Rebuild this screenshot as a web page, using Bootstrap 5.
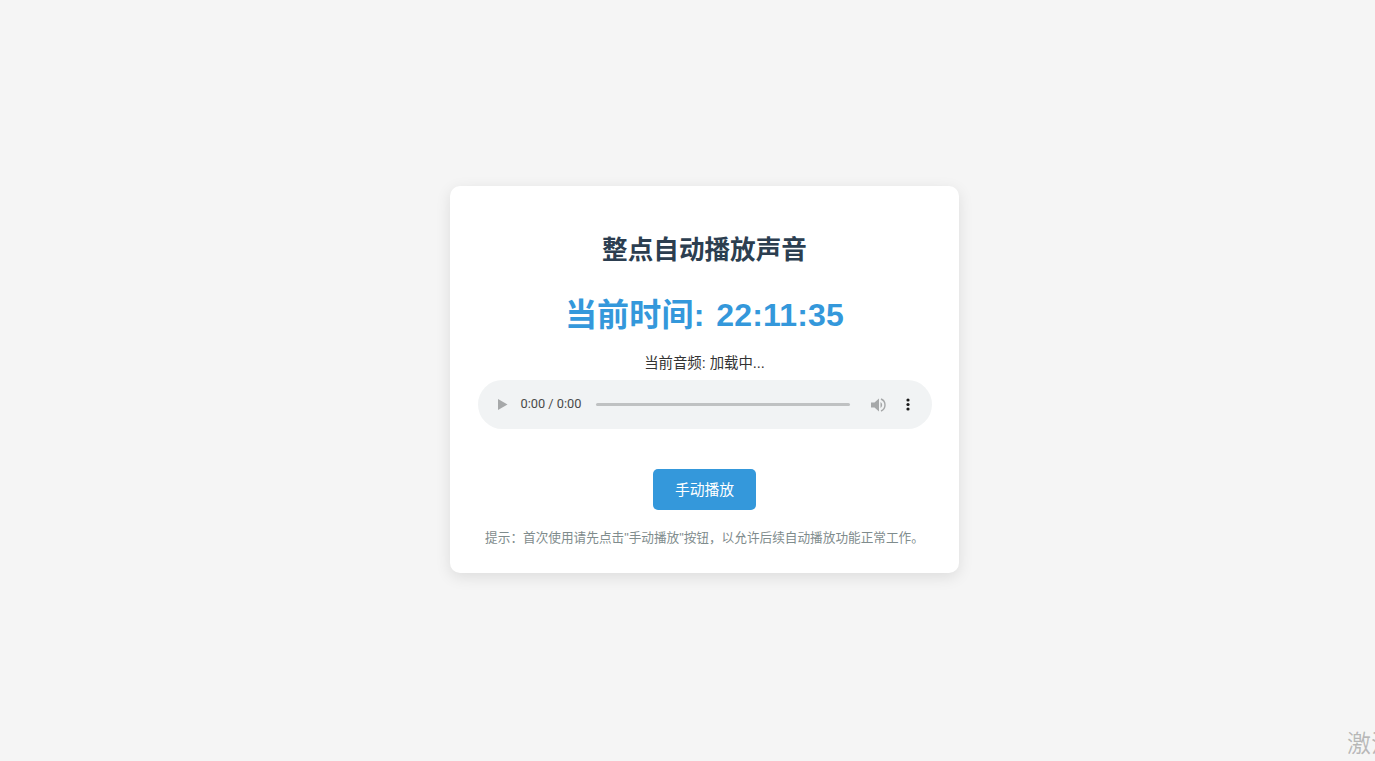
<!DOCTYPE html>
<html lang="zh-CN">
<head>
<meta charset="utf-8">
<title>整点自动播放声音</title>
<link href="https://cdn.jsdelivr.net/npm/bootstrap@5.3.0/dist/css/bootstrap.min.css" rel="stylesheet">
<style>
html { height: 100%; overflow: hidden; }
body { height: 100%; width: 1409px; background: #f5f5f5; font-family: "Liberation Sans", "Noto Sans CJK SC", sans-serif; color: #333; }
.panel { width: 509px; height: 387px; padding: 0 27.5px; margin-bottom: 2px; border-radius: 10px; background: #fff; box-shadow: 0 4px 15px rgba(0,0,0,.1); }
.ttl { font-size: 25.6px; font-weight: 700; color: #2c3e50; line-height: 30px; margin: 49px 0 0; }
.clock { font-size: 32px; font-weight: 700; color: #3498db; line-height: 38px; margin: 31px 0 0; letter-spacing: .2px; word-spacing: 2.5px; }
.now { font-size: 14.4px; line-height: 17px; margin: 21px 0 0; }
.player { height: 49px; margin-top: 8px; padding: 0 22px 0 20px; border-radius: 25px; background: #f1f3f4; color: #4a4a4a; font: 12.8px/1 Roboto, sans-serif; }
.ptime { margin-left: 13px; }
.track { height: 3.5px; border-radius: 2px; background: #bfc1c2; margin: 0 21px 0 14.5px; }
.menu-dots { margin-left: 19px; }
.playbtn { display: block; margin: 40px auto 0; width: 103px; height: 41px; padding: 0; background: #3498db; border: 0; border-radius: 5px; color: #fff; font-size: 14.8px; line-height: 42px; }
.playbtn:hover { background: #3498db; color: #fff; }
.hint { font-size: 12.65px; line-height: 15px; color: #7f8c8d; margin: 21px 0 0; white-space: nowrap; }
.wm { position: absolute; left: 1347px; top: 727px; font-size: 24px; line-height: 30px; color: rgba(0,0,0,.25); white-space: nowrap; font-family: "Noto Sans CJK SC", sans-serif; }
</style>
</head>
<body class="d-flex justify-content-center align-items-center">
<div class="panel text-center">
  <h1 class="ttl">整点自动播放声音</h1>
  <div class="clock">当前时间: 22:11:35</div>
  <div class="now">当前音频: 加载中...</div>
  <div class="player d-flex align-items-center">
    <svg width="10" height="11" viewBox="0 0 10 11" class="flex-shrink-0"><path d="M0 0 L9.5 5.5 L0 11 Z" fill="#a6a8a9"/></svg>
    <span class="ptime flex-shrink-0 text-nowrap">0:00 / 0:00</span>
    <div class="track flex-grow-1"></div>
    <svg width="16" height="14" viewBox="0 0 16 14" class="flex-shrink-0"><path d="M0 4.5 H3.5 L8 0.5 V13.5 L3.5 9.5 H0 Z" fill="#a6a8a9"/><path d="M9.5 4 A3.5 3.5 0 0 1 9.5 10 Z" fill="#a6a8a9"/><path d="M10 1 A6.5 6.5 0 0 1 10 13" fill="none" stroke="#a6a8a9" stroke-width="1.4"/></svg>
    <svg width="4" height="13" viewBox="0 0 4 13" class="menu-dots flex-shrink-0"><circle cx="2" cy="2" r="1.6" fill="#1a1a1a"/><circle cx="2" cy="6.5" r="1.6" fill="#1a1a1a"/><circle cx="2" cy="11" r="1.6" fill="#1a1a1a"/></svg>
  </div>
  <button class="btn playbtn" type="button">手动播放</button>
  <p class="hint">提示：首次使用请先点击"手动播放"按钮，以允许后续自动播放功能正常工作。</p>
</div>
<div class="wm">激活 Windows</div>
</body>
</html>
